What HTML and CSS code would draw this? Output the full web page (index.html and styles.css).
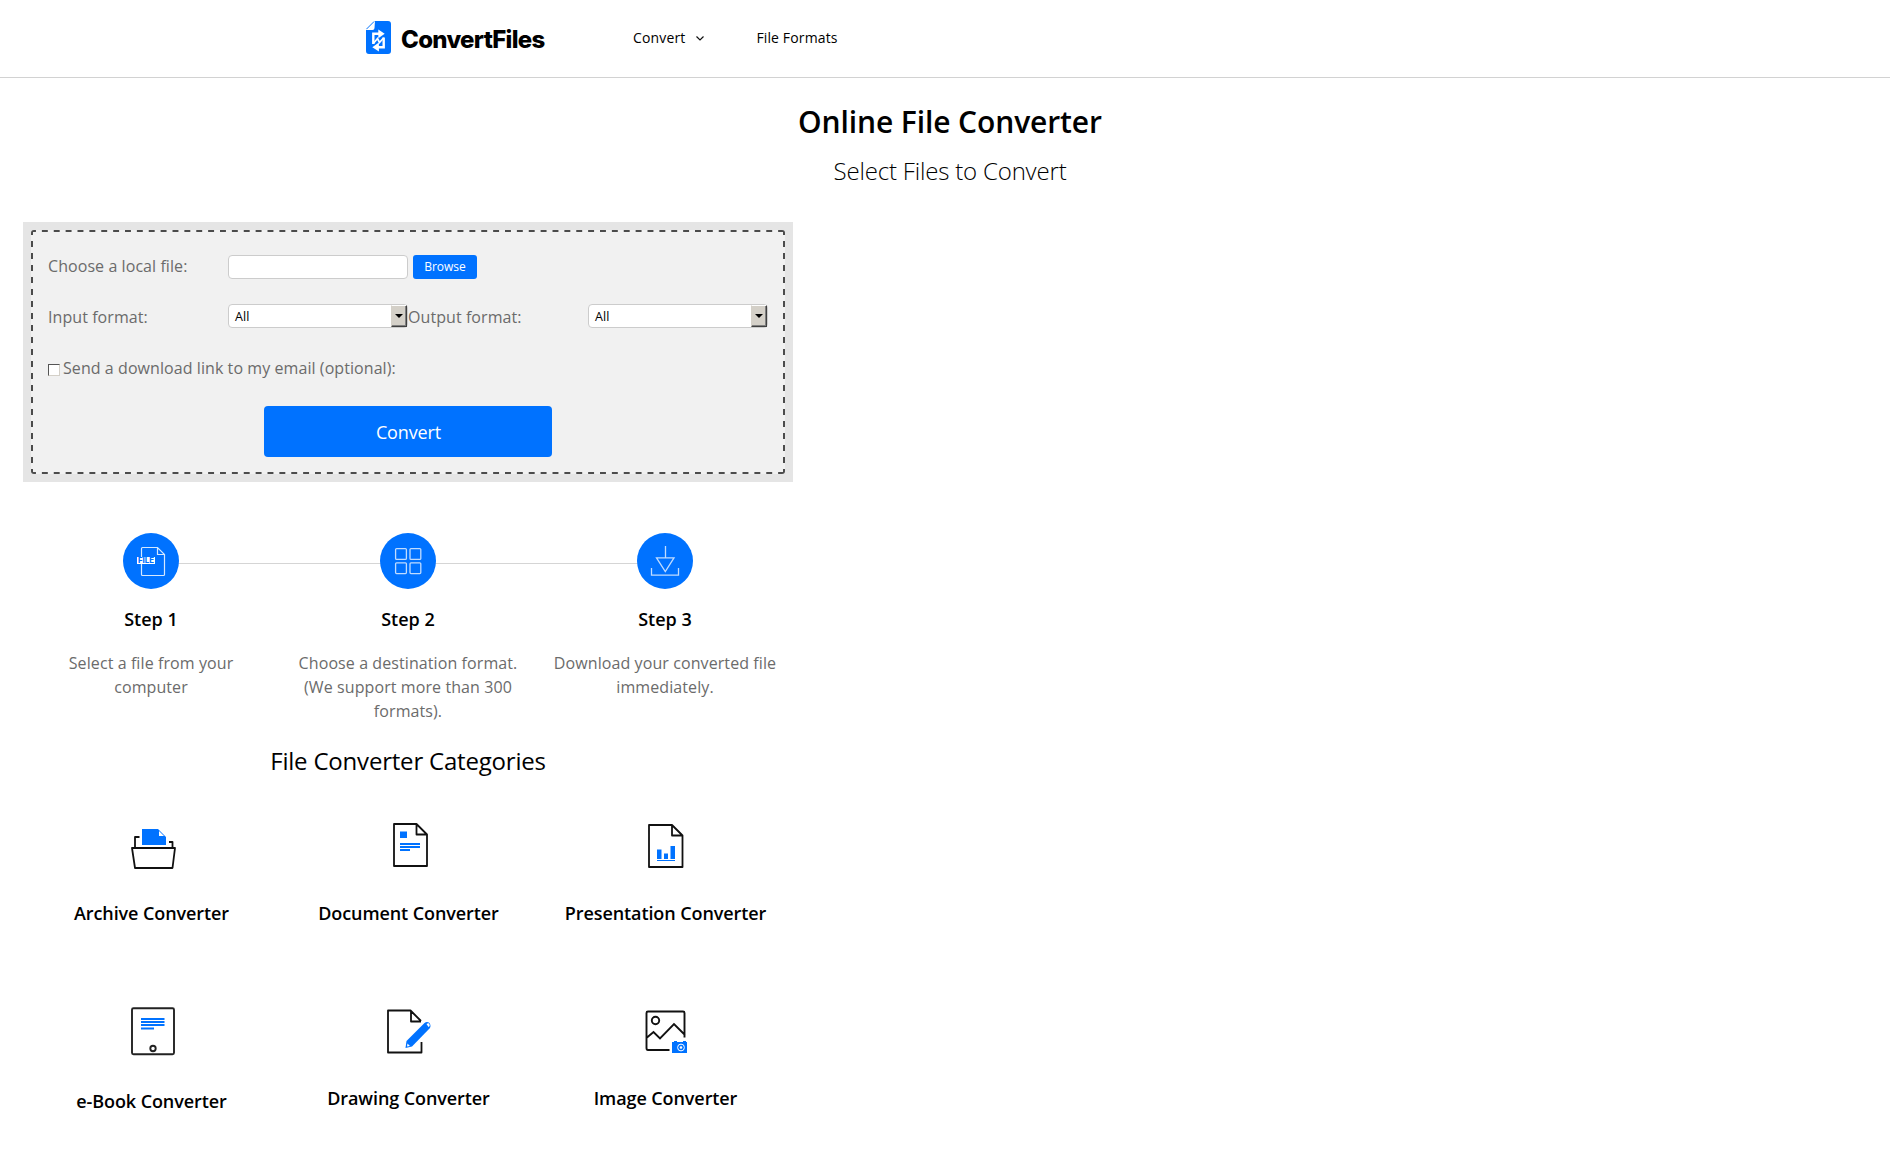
FILE: index.html
```html
<!DOCTYPE html>
<html lang="en">
<head>
<meta charset="utf-8">
<title>Online File Converter</title>
<link rel="stylesheet" href="styles.css">
</head>
<body>
<header class="site-header">
  <a class="logo">
    <svg class="logo-mark" width="25" height="33" viewBox="0 0 25 33">
      <path fill="#0072ff" d="M9 0H22Q25 0 25 3V30Q25 33 22 33H3Q0 33 0 30V9H6.500Q8.500 9 8.500 7Z"/>
      <path fill="none" stroke="#0072ff" d="M.4 8.200L8.200 .4"/>
      <path fill="none" stroke="#fff" stroke-width="2.400" d="M7.300 23V12.800H13M17.700 16.500V26.300H12"/>
      <path fill="none" stroke="#fff" stroke-width="1.700" d="M7.300 22.500L11.500 17.500L13.500 21.500L17.700 16.800"/>
      <path fill="#fff" d="M12.300 8.500L18.700 12.800L12.300 17.300ZM12.900 21.500L6.300 26.200L12.900 30.500Z"/>
    </svg>
    <span class="logo-name">ConvertFiles</span>
  </a>
  <nav class="nav">
    <a class="nav-item">Convert<svg class="chevron" width="8" height="5" viewBox="0 0 8 5"><path fill="none" stroke="#111" stroke-width="1.200" d="M.5.5L4 4L7.500.5"/></svg></a>
    <a class="nav-item">File Formats</a>
  </nav>
</header>
<section class="hero">
  <h1 class="title">Online File Converter</h1>
  <p class="subtitle">Select Files to Convert</p>
</section>
<main class="content">
  <form class="panel">
    <div class="drop-area">
      <div class="row">
        <label class="label label-file">Choose a local file:</label>
        <input class="field" type="text">
        <button class="browse" type="button">Browse</button>
      </div>
      <div class="row">
        <label class="label">Input format:</label>
        <div class="field select">All<span class="arrow"></span></div>
        <label class="label">Output format:</label>
        <div class="field select">All<span class="arrow"></span></div>
      </div>
      <div class="row">
        <span class="check"></span>
        <label class="label-wide">Send a download link to my email (optional):</label>
      </div>
      <button class="convert" type="button">Convert</button>
    </div>
  </form>
  <section class="steps">
    <div class="step">
      <svg class="disc" width="56" height="56" viewBox="0 0 56 56"><circle cx="28" cy="28" r="28" fill="#0072ff"/><path fill="none" stroke="#d5e8ff" stroke-width="1.200" d="M18.500 24V15.500Q18.500 14.500 19.500 14.500H34.500L41.500 21.500V41.500Q41.500 42.500 40.500 42.500H19.500Q18.500 42.500 18.500 41.500V31M34.500 14.500V21.500H41.500"/><rect x="14" y="24" width="18" height="7" fill="#fff"/><text class="file-tag" x="15" y="30" textLength="16" lengthAdjust="spacingAndGlyphs">FILE</text></svg>
      <h3 class="step-title">Step 1</h3>
      <p class="step-text">Select a file from your computer</p>
    </div>
    <div class="step">
      <svg class="disc" width="56" height="56" viewBox="0 0 56 56"><circle cx="28" cy="28" r="28" fill="#0072ff"/><g fill="none" stroke="#c0dcff" stroke-width="1.300"><rect x="15.600" y="15.600" width="10.800" height="10.800" rx="1"/><rect x="30" y="15.600" width="10.800" height="10.800" rx="1"/><rect x="15.600" y="29.800" width="10.800" height="10.800" rx="1"/><rect x="30" y="29.800" width="10.800" height="10.800" rx="1"/></g></svg>
      <h3 class="step-title">Step 2</h3>
      <p class="step-text">Choose a destination format. (We support more than 300 formats).</p>
    </div>
    <div class="step">
      <svg class="disc" width="56" height="56" viewBox="0 0 56 56"><circle cx="28" cy="28" r="28" fill="#0072ff"/><path fill="none" stroke="#c0dcff" stroke-width="1.300" d="M28.500 13V24.500M19.500 24.800H37L28.300 38.500ZM14.500 35V42.200H41.500V35"/></svg>
      <h3 class="step-title">Step 3</h3>
      <p class="step-text">Download your converted file immediately.</p>
    </div>
  </section>
  <h2 class="section-title">File Converter Categories</h2>
  <section class="categories">
    <a class="category">
      <svg class="pic" width="60" height="60" viewBox="0 0 60 60"><path fill="none" stroke="#111" stroke-width="1.800" stroke-linejoin="round" d="M14 27V17H18.500M48 22H51.500V27M11 28H54L51.500 48H14Z"/><path fill="#0072ff" d="M21 9H37L45 17V25H21Z"/><path fill="#fff" d="M38 11V16H43Z"/></svg>
      <span class="category-name">Archive Converter</span>
    </a>
    <a class="category">
      <svg class="pic" width="60" height="60" viewBox="0 0 60 60"><path fill="none" stroke="#111" stroke-width="1.800" stroke-linejoin="round" d="M16 4H38.500L49 14.500V46H16ZM38.500 4V14.500H49"/><path fill="#0072ff" d="M22 11.500H29V18H22ZM22 23H42V25H22ZM22 26H42V28H22ZM22 29H32V31H22Z"/></svg>
      <span class="category-name">Document Converter</span>
    </a>
    <a class="category">
      <svg class="pic" width="60" height="60" viewBox="0 0 60 60"><path fill="none" stroke="#111" stroke-width="1.800" stroke-linejoin="round" d="M14 5H37L47.500 15.500V47H14ZM37 5V15.500H47.500"/><path fill="#0072ff" d="M22 29.500H26.500V39H22ZM29 33.500H33V39H29ZM35.500 26H40V39H35.500ZM22 40H40V41H22Z"/></svg>
      <span class="category-name">Presentation Converter</span>
    </a>
    <a class="category lower ebook">
      <svg class="pic" width="60" height="60" viewBox="0 0 60 60"><g fill="none" stroke="#222" stroke-width="1.900"><rect x="11" y="8.300" width="42" height="46" rx="1.500"/><circle cx="32" cy="48.500" r="2.700"/></g><path fill="#0072ff" d="M20 18H43.500V20H20ZM20 21H43.500V23H20ZM20 24H43.500V26H20ZM20 27.500H33V29.500H20Z"/></svg>
      <span class="category-name">e-Book Converter</span>
    </a>
    <a class="category lower">
      <svg class="pic" width="60" height="60" viewBox="0 0 60 60"><path fill="none" stroke="#111" stroke-width="1.800" stroke-linejoin="round" d="M43 21L32.500 10.500H10V52.500H43.500V42M33 11V21.500H43"/><path fill="#0072ff" d="M27.500 48L28.500 41L46.500 23Q49 21 51.500 23Q53.500 26 51.500 28.500L34 46.500Z"/><path fill="#fff" d="M29.500 43.500L32 46L29 46.500ZM48.500 24Q51 22.500 51.500 24.500Q52.500 26 50.500 27Z"/></svg>
      <span class="category-name">Drawing Converter</span>
    </a>
    <a class="category lower">
      <svg class="pic" width="60" height="60" viewBox="0 0 60 60"><g fill="none" stroke="#111" stroke-width="1.900"><path d="M49.500 37.500V13Q49.500 11.500 48 11.500H13Q11.500 11.500 11.500 13V48Q11.500 50 13 50H34.500M12 37.500L18.500 32L25 38.500L39 24L50 35"/><circle cx="20.500" cy="20.500" r="3.700"/></g><path fill="#0072ff" d="M37 42H39V41H42V42H48V41H51V42H52V53H37Z"/><circle cx="46" cy="47.500" r="3.400" fill="none" stroke="#fff"/><circle cx="46" cy="47.500" r="1.300" fill="#fff"/></svg>
      <span class="category-name">Image Converter</span>
    </a>
  </section>
</main>
</body>
</html>
```
FILE: styles.css
```css
* { box-sizing: border-box; }
body { margin: 0; height: 1155px; overflow: hidden; background: #fff; color: #000; font-family: "Open Sans", sans-serif; }
h1, h2, h3, p { margin: 0; }
.site-header { display: flex; height: 78px; padding-left: 366px; border-bottom: 1px solid #d2d2d2; }
.logo { display: flex; width: 267px; padding-top: 21px; gap: 10px; }
.logo-name { font: 800 24px/37px Inter, sans-serif; letter-spacing: -0.7px; }
.nav { display: flex; align-items: flex-start; gap: 52px; padding-top: 28px; font-size: 14px; line-height: 20px; letter-spacing: 0.14px; }
.nav-item { display: flex; align-items: center; white-space: nowrap; }
.chevron { margin-left: 11px; }
.hero { padding: 24px 0 0 10px; text-align: center; }
.title { font-size: 30px; line-height: 40px; font-weight: 600; letter-spacing: -0.11px; }
.subtitle { margin-top: 13px; font-size: 24px; line-height: 32px; font-weight: 300; letter-spacing: -0.18px; }
.content { width: 770px; margin: 35px 0 0 23px; }
.panel { height: 260px; padding: 8px; background: #e5e5e5; }
.drop-area {
  height: 244px;
  padding: 24px 17px;
  border-radius: 3px;
  background:
    linear-gradient(90deg, #4b4b4b 50%, transparent 50%) -1px 0 / 11.88px 2px repeat-x,
    linear-gradient(90deg, #4b4b4b 50%, transparent 50%) -1px 100% / 11.88px 2px repeat-x,
    linear-gradient(#4b4b4b 50%, transparent 50%) 0 -1px / 2px 12px repeat-y,
    linear-gradient(#4b4b4b 50%, transparent 50%) 100% -1px / 2px 12px repeat-y,
    #f1f1f1;
}
.row { display: flex; align-items: center; height: 26px; margin-bottom: 24px; color: #6b6b6b; font-size: 16px; letter-spacing: 0.07px; }
.row + .row { margin-bottom: 25px; }
.label { width: 180px; }
.label-file { padding-bottom: 2px; }
.label-wide { margin-left: 3px; }
.field { width: 180px; height: 24px; border: 1px solid #ccc; border-radius: 4px; background: #fff; }
.browse { width: 64px; height: 24px; margin-left: 5px; padding: 0 0 1px; border: 0; border-radius: 3px; background: #0072ff; color: #fff; font: 12px "Open Sans", sans-serif; }
.select { display: flex; align-items: center; justify-content: space-between; margin-top: -2px; padding-left: 6px; color: #000; font-size: 12.500px; }
.arrow { display: flex; align-items: center; justify-content: center; width: 16px; height: 22px; border: 1px solid; border-color: #fff #404040 #404040 #d4d0c8; box-shadow: inset -1px -1px #808080; background: #d4d0c8; }
.arrow::after { content: ""; border: 4px solid transparent; border-top-color: #000; border-bottom: 0; }
.check { width: 12px; height: 12px; margin-top: 4px; border: 1px solid; border-color: #555 #d4d0c8 #d4d0c8 #555; background: #fff; }
.convert { display: block; width: 288px; height: 51px; margin: 0 auto; padding: 0 0 0 1px; border: 0; border-radius: 4px; background: #0072ff; color: #fff; font: 18px "Open Sans", sans-serif; letter-spacing: -0.12px; }
.steps { display: grid; grid-template-columns: repeat(3, 257px); height: 199px; margin: 51px 0 0 -1px; background: linear-gradient(#d5d5d5, #d5d5d5) 128px 30px / 514px 1px no-repeat; }
.step { display: flex; flex-direction: column; align-items: center; }
.step-title { margin-top: 17px; padding-left: 1px; font-size: 18px; line-height: 26px; font-weight: 600; }
.step-text { width: 229px; margin-top: 19px; padding-left: 1px; color: #6b6b6b; font-size: 16px; line-height: 24px; letter-spacing: 0.09px; text-align: center; }
.file-tag { fill: #0072ff; font: 800 7.500px Inter, sans-serif; }
.section-title { margin-top: 12px; font-size: 24px; line-height: 34px; font-weight: 400; letter-spacing: -0.2px; text-align: center; }
.categories { display: grid; grid-template-columns: repeat(3, 257px); grid-auto-rows: 185px; margin-top: 42px; }
.category { display: flex; flex-direction: column; align-items: center; }
.pic { margin-left: -2px; }
.category-name { margin-top: 20px; font-size: 18px; line-height: 26px; font-weight: 600; letter-spacing: -0.09px; white-space: nowrap; }
.lower .pic { margin-top: -5px; }
.lower .category-name { margin-top: 25px; }
.ebook .category-name { margin-top: 28px; }
```
